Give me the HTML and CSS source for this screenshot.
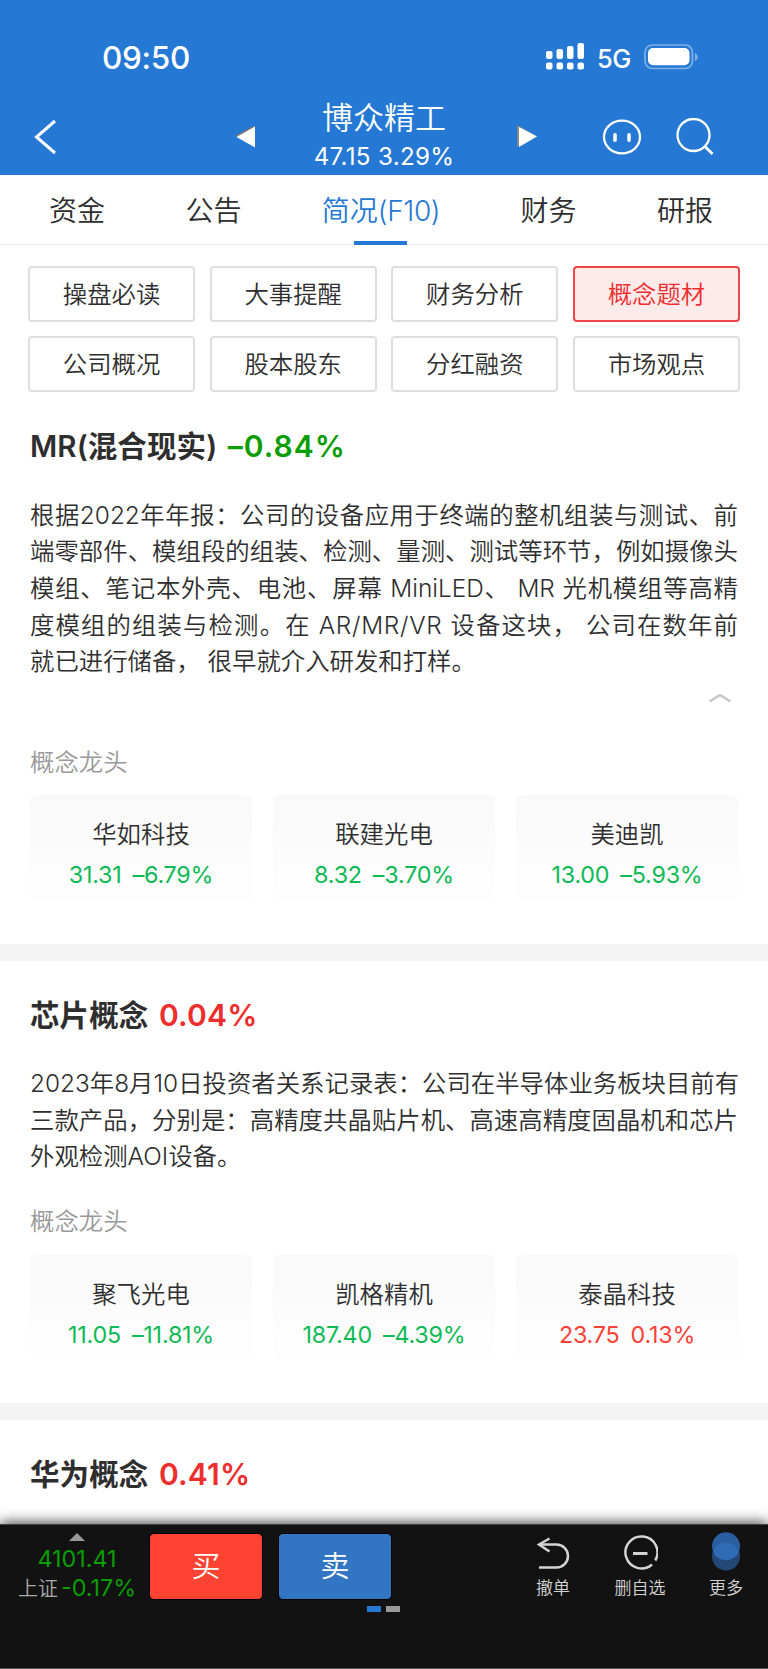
FILE: index.html
```html
<!DOCTYPE html>
<html lang="zh-CN">

<head>
    <meta charset="UTF-8">
    <meta name="viewport" content="width=device-width, initial-scale=1.0">
    <title>博众精工</title>
    <link rel="stylesheet" href="styles.css">
</head>

<body>
    <div class="header">
        <div class="status">
            <span class="time">09:50</span>
            <svg class="signal" width="38" height="27" viewBox="0 0 38 27" fill="#fff">
                <rect x="0" y="8" width="6.5" height="8" rx="2" />
                <rect x="10.5" y="6" width="6.5" height="10" rx="2" />
                <rect x="21" y="3" width="6.5" height="13" rx="2" />
                <rect x="31.5" y="0" width="6.5" height="16" rx="2" />
                <rect x="0" y="19.5" width="6.5" height="7" rx="2" />
                <rect x="10.5" y="19.5" width="6.5" height="7" rx="2" />
                <rect x="21" y="19.5" width="6.5" height="7" rx="2" />
                <rect x="31.5" y="19.5" width="6.5" height="7" rx="2" />
            </svg>
            <span class="net">5G</span>
            <svg class="battery" width="54" height="26" viewBox="0 0 54 26">
                <rect x="1" y="1" width="47.5" height="23.5" rx="7.5" fill="none" stroke="#7fafe6" stroke-width="1.7" />
                <rect x="4" y="4" width="41.5" height="17.2" rx="5" fill="#fff" />
                <path d="M51 9c3.600 1.500 3.600 6.500 0 8z" fill="#7fafe6" />
            </svg>
        </div>
        <div class="nav">
            <svg class="back" width="22" height="36" viewBox="0 0 22 36" fill="none" stroke="#fff" stroke-width="3">
                <path d="M21 2L2.500 18L21 34" />
            </svg>
            <svg class="prev" width="20" height="23" viewBox="0 0 20 23">
                <path d="M0 11L19 0.500V11z" fill="#777" />
                <path d="M1.500 12L20 1.500V22.500z" fill="#fff" />
            </svg>
            <div class="stock">
                <div class="name">博众精工</div>
                <div class="price">47.15 3.29%</div>
            </div>
            <svg class="next" width="20" height="23" viewBox="0 0 20 23">
                <path d="M0 0L19.500 11L0 22z" fill="#888" />
                <path d="M2 2L20 11.500L2 22z" fill="#fff" />
            </svg>
            <svg class="face" width="40" height="36" viewBox="0 0 40 36" fill="none" stroke="#fff">
                <ellipse cx="20" cy="18" rx="18" ry="16.300" stroke-width="2.300" />
                <path d="M13 15.800v5.400M27 15.800v5.400" stroke-width="3.600" stroke-linecap="round" />
            </svg>
            <svg class="search" width="38" height="38" viewBox="0 0 38 38" fill="none" stroke="#fff" stroke-width="2.300">
                <circle cx="17.500" cy="17" r="16" />
                <path d="M28.500 28L36.500 36" stroke-width="2.800" />
            </svg>
        </div>
    </div>

    <div class="tabs">
        <a>资金</a>
        <a>公告</a>
        <a class="on">简况<span>(F10)</span></a>
        <a>财务</a>
        <a>研报</a>
    </div>

    <div class="menu">
        <a>操盘必读</a>
        <a>大事提醒</a>
        <a>财务分析</a>
        <a class="on">概念题材</a>
        <a>公司概况</a>
        <a>股本股东</a>
        <a>分红融资</a>
        <a>市场观点</a>
    </div>

    <div class="concept">
        <h2>MR(混合现实) <span class="down">–0.84%</span></h2>
        <div class="text">
            <p>根据2022年年报：公司的设备应用于终端的整机组装与测试、前</p>
            <p>端零部件、模组段的组装、检测、量测、测试等环节，例如摄像头</p>
            <p>模组、笔记本外壳、电池、屏幕 MiniLED、 MR 光机模组等高精</p>
            <p>度模组的组装与检测。在 <span>AR/MR/VR</span> 设备这块， 公司在数年前</p>
            <p class="last">就已进行储备， 很早就介入研发和打样。</p>
        </div>
        <div class="fold">
            <svg width="24" height="10" viewBox="0 0 24 10" fill="none" stroke="#c4c4c4" stroke-width="2.200">
                <path d="M1.500 8.500L12 2L22.500 8.500" />
            </svg>
        </div>
        <h3>概念龙头</h3>
        <div class="leaders">
            <div class="card">
                <b>华如科技</b>
                <span class="fall"><i>31.31</i><i>–6.79%</i></span>
            </div>
            <div class="card">
                <b>联建光电</b>
                <span class="fall"><i>8.32</i><i>–3.70%</i></span>
            </div>
            <div class="card">
                <b>美迪凯</b>
                <span class="fall"><i>13.00</i><i>–5.93%</i></span>
            </div>
        </div>
    </div>

    <div class="concept">
        <h2>芯片概念 <span class="up">0.04%</span></h2>
        <div class="text">
            <p>2023年8月10日投资者关系记录表：公司在半导体业务板块目前有</p>
            <p>三款产品，分别是：高精度共晶贴片机、高速高精度固晶机和芯片</p>
            <p class="last">外观检测AOI设备。</p>
        </div>
        <h3>概念龙头</h3>
        <div class="leaders">
            <div class="card">
                <b>聚飞光电</b>
                <span class="fall"><i>11.05</i><i>–11.81%</i></span>
            </div>
            <div class="card">
                <b>凯格精机</b>
                <span class="fall"><i>187.40</i><i>–4.39%</i></span>
            </div>
            <div class="card">
                <b>泰晶科技</b>
                <span class="rise"><i>23.75</i><i>0.13%</i></span>
            </div>
        </div>
    </div>

    <div class="concept end">
        <h2>华为概念 <span class="up">0.41%</span></h2>
    </div>

    <div class="footer">
        <div class="bar">
            <div class="index">
                <svg width="16" height="8" viewBox="0 0 16 8"><path d="M8 0L16 8H0z" fill="#999" /></svg>
                <div class="point">4101.41</div>
                <div class="rate"><em>上证</em><span>-0.17%</span></div>
            </div>
            <a class="buy">买</a>
            <a class="sell">卖</a>
            <a class="tool undo">
                <svg width="36" height="40" viewBox="0 0 36 40" fill="none" stroke="#d4d4d4" stroke-width="2.500">
                    <path d="M4 12.500H21.500A11.500 11.500 0 0 1 21.500 35.500H4" />
                    <path d="M14.500 6.500L4 12.500L14.500 19.500" />
                </svg>
                撤单
            </a>
            <a class="tool del">
                <svg width="36" height="40" viewBox="0 0 36 40" fill="none" stroke="#d4d4d4" stroke-width="2.500">
                    <path d="M30 32.500A16 16 0 1 1 33.300 28.500" />
                    <path d="M11 21.500H25.500" stroke-width="3" />
                </svg>
                删自选
            </a>
            <a class="tool more">
                <svg width="36" height="40" viewBox="0 0 36 40">
                    <circle cx="18" cy="24.500" r="14" fill="#234876" />
                    <circle cx="18" cy="14.300" r="14" fill="#2a5ea0" />
                    <path d="M5 19.400A14 14 0 0 1 31 19.400A14 14 0 0 1 5 19.400" fill="#2f6cb5" />
                </svg>
                更多
            </a>
        </div>
        <div class="pager"><i class="cur"></i><i></i></div>
    </div>
</body>

</html>
```

FILE: styles.css
```css
* {
    margin: 0;
    padding: 0;
    box-sizing: border-box;
}

body {
    width: 768px;
    height: 1669px;
    overflow: hidden;
    display: flex;
    flex-direction: column;
    font-family: Inter, "Noto Sans CJK SC", sans-serif;
    font-weight: 350;
    color: #2e2e2e;
    background: #fff;
}

i, em {
    font-style: normal;
}

svg {
    display: block;
    flex: none;
}

.header {
    height: 175px;
    background: #2578d4;
    color: #fff;
}

.status {
    height: 98px;
    padding: 0 70px 0 102px;
    display: flex;
    align-items: flex-start;
}

.time {
    margin-top: 39px;
    font-size: 31.5px;
    line-height: 38px;
    font-weight: 550;
    letter-spacing: -0.3px;
}

.signal {
    margin: 43px 13px 0 auto;
}

.net {
    width: 34px;
    margin: 43px 13px 0 0;
    font-size: 25.5px;
    line-height: 32px;
    letter-spacing: -0.6px;
    font-weight: 450;
    white-space: nowrap;
}

.battery {
    margin-top: 44px;
}

.nav {
    height: 77px;
    padding-left: 34px;
    display: flex;
    align-items: flex-start;
}

.back {
    margin-top: 21px;
}

.prev {
    margin: 27px 0 0 179px;
}

.stock {
    width: 258px;
    text-align: center;
}

.name {
    height: 41px;
    font-size: 31px;
    line-height: 40px;
}

.price {
    font-size: 24.2px;
    line-height: 36px;
    font-weight: 400;
    letter-spacing: 0.3px;
}

.next {
    margin: 27px 0 0 4px;
}

.face {
    margin: 21px 0 0 65px;
}

.search {
    margin: 20px 0 0 34px;
}

.tabs {
    height: 70px;
    padding: 0 55px 0 49px;
    display: flex;
    justify-content: space-between;
    border-bottom: 1px solid #eee;
    font-size: 28px;
    line-height: 73px;
}

.tabs .on {
    position: relative;
    color: #2578d4;
}

.tabs .on span {
    letter-spacing: -0.4px;
}

.tabs .on::after {
    content: "";
    position: absolute;
    left: 50%;
    bottom: -1px;
    width: 53px;
    height: 4px;
    margin-left: -27px;
    background: #2578d4;
}

.menu {
    padding: 21px 28px 0;
    display: grid;
    grid-template-columns: repeat(4, 1fr);
    gap: 14px 14.6px;
}

.menu a {
    height: 56px;
    border: 2px solid #dedede;
    border-radius: 4px;
    font-size: 24.4px;
    line-height: 53px;
    text-align: center;
}

.menu .on {
    color: #ee2d2d;
    border-color: #ee4549;
    background: #fdeaeb;
}

.concept {
    padding: 32px 30px 43px;
    border-bottom: 17px solid #f4f4f4;
}

.concept h2 {
    height: 44px;
    font-size: 29.5px;
    line-height: 44px;
    font-weight: 600;
    letter-spacing: 0.1px;
    white-space: nowrap;
}

.concept h2 span {
    margin-left: 3px;
    font-size: 30px;
    letter-spacing: 0.2px;
}

.concept .down {
    color: #0a9e04;
    letter-spacing: 1px;
}

.up {
    color: #ee2d2d;
}

.text {
    margin-top: 28.5px;
    font-size: 24.4px;
    line-height: 36.7px;
}

.text p {
    white-space: nowrap;
    text-align: justify;
    text-align-last: justify;
}

.text span {
    letter-spacing: 0.7px;
}

.text .last {
    text-align-last: left;
}

.fold {
    height: 35.5px;
    padding: 13px 6px 0;
    display: flex;
    justify-content: flex-end;
}

.concept h3 {
    margin-top: 28px;
    font-size: 24.4px;
    line-height: 36px;
    font-weight: 350;
    color: #999;
}

.leaders {
    margin-top: 15.5px;
    display: grid;
    grid-template-columns: repeat(3, 1fr);
    gap: 21px;
}

.card {
    height: 105.5px;
    padding-top: 21px;
    border-radius: 6px;
    background: linear-gradient(#f9f9f9, #fefefe);
    text-align: center;
}

.card b {
    display: block;
    font-size: 24.4px;
    line-height: 37px;
    font-weight: 350;
}

.card span {
    display: flex;
    justify-content: center;
    gap: 11px;
    font-size: 23.3px;
    line-height: 44px;
    font-weight: 400;
    letter-spacing: -0.2px;
}

.fall {
    color: #0dba55;
}

.rise {
    color: #fb4238;
}

.end {
    height: 104px;
    padding-bottom: 0;
    border: 0;
}

.footer {
    flex: 1;
    background: #121212;
    border-top: 1px solid #444;
    border-bottom: 1px solid #555;
    box-shadow: 0 -2px 12px rgba(0, 0, 0, 0.7);
}

.bar {
    height: 81px;
    padding-left: 16px;
    display: flex;
    align-items: flex-start;
}

.index {
    width: 124px;
    padding: 8px 2px 0 0;
    display: flex;
    flex-direction: column;
    align-items: center;
}

.point, .rate span {
    color: #0a9e04;
    font-size: 23.3px;
    font-weight: 400;
    white-space: nowrap;
}

.point {
    line-height: 35px;
}

.rate {
    display: flex;
    gap: 3px;
    line-height: 24px;
}

.rate em {
    font-size: 20px;
    line-height: 26px;
    color: #aaa;
}

.buy, .sell {
    width: 114px;
    height: 67px;
    margin: 8px 0 0 9px;
    border: 1px solid #000;
    border-radius: 5px;
    color: #fff;
    font-size: 29px;
    line-height: 66px;
    text-align: center;
}

.buy {
    background: #ff4332;
}

.sell {
    margin-left: 15px;
    background: #3175c3;
}

.tool {
    width: 80px;
    padding-top: 7px;
    display: flex;
    flex-direction: column;
    align-items: center;
    font-size: 17px;
    line-height: 32px;
    color: #d4d4d4;
}

.undo {
    margin-left: 121px;
}

.del {
    margin-left: 7px;
}

.more {
    margin-left: 6px;
}

.pager {
    padding-right: 2px;
    display: flex;
    justify-content: center;
    gap: 5px;
}

.pager i {
    width: 14px;
    height: 6px;
    background: #999;
}

.pager .cur {
    background: #2578d4;
}
```
